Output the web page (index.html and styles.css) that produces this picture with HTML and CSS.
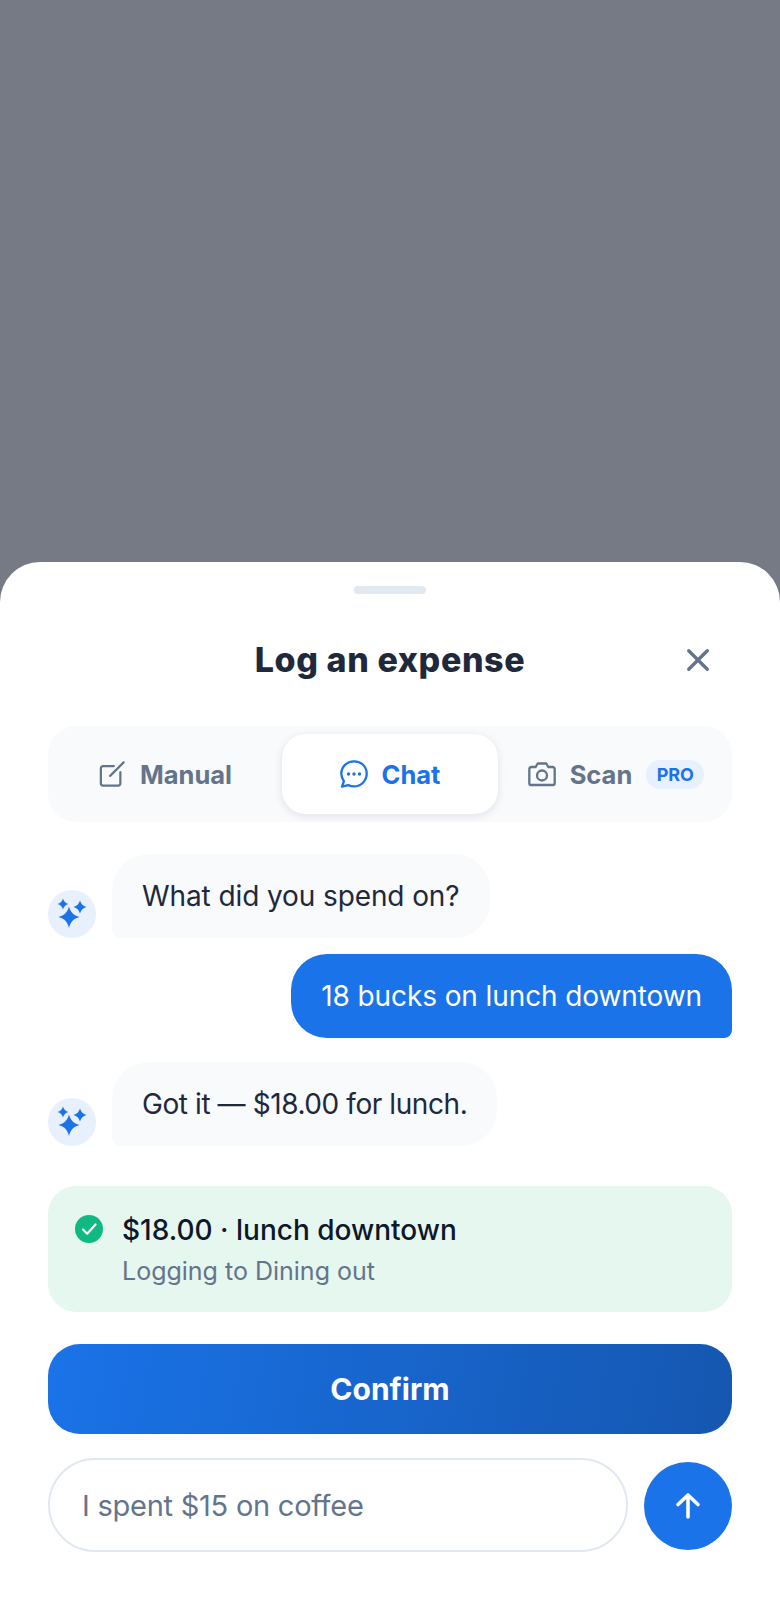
FILE: index.html
```html
<!DOCTYPE html>
<html lang="en">
<head>
<meta charset="utf-8">
<title>Log an expense</title>
<link rel="stylesheet" href="styles.css">
</head>
<body>
<div class="scrim">
  <section class="sheet">
    <div class="handle"></div>
    <header class="sheet-head">
      <h1 class="title">Log an expense</h1>
      <button class="close" aria-label="Close">
        <svg class="close-icon" viewBox="0 0 28 28" fill="none" stroke="currentColor" stroke-width="3.6" stroke-linecap="round"><path d="M4 4l20 20M24 4L4 24"/></svg>
      </button>
    </header>
    <nav class="tabs">
      <div class="tab tab-manual">
        <svg class="tab-icon-manual" viewBox="0 0 28 28" fill="none" stroke="currentColor" stroke-width="2.4" stroke-linecap="round" stroke-linejoin="round"><path d="M16 5.500H4.500a2.500 2.500 0 0 0-2.500 2.500v16a2.500 2.500 0 0 0 2.500 2.500h16a2.500 2.500 0 0 0 2.500-2.500V12"/><path d="M12 16L26.500 1.500"/></svg>
        <span class="tab-label">Manual</span>
      </div>
      <div class="tab tab-active">
        <svg class="tab-icon" viewBox="0 0 28 28" fill="none" stroke="currentColor" stroke-width="2.300" stroke-linecap="round" stroke-linejoin="round"><path d="M14 1.300C7 1.300 1.300 6.800 1.300 13.600c0 2.800 1 5.400 2.600 7.500L2 26.700l6.300-1.600c1.700.8 3.700 1.300 5.700 1.300 7 0 12.700-5.600 12.700-12.800S21 1.300 14 1.300z"/><circle class="dot" cx="8.500" cy="14" r="1.700"/><circle class="dot" cx="14" cy="14" r="1.700"/><circle class="dot" cx="19.500" cy="14" r="1.700"/></svg>
        <span class="tab-label">Chat</span>
      </div>
      <div class="tab">
        <svg class="tab-icon" viewBox="0 0 28 28" fill="none" stroke="currentColor" stroke-width="2.300" stroke-linecap="round" stroke-linejoin="round"><path d="M3.500 7h4.200l2-3.500h8.600l2 3.500h4.200A2.200 2.200 0 0 1 26.700 9.200v14a1.800 1.800 0 0 1-1.800 1.800H3.100a1.800 1.800 0 0 1-1.800-1.800v-14A2.200 2.200 0 0 1 3.500 7z"/><circle cx="14" cy="15.500" r="5"/></svg>
        <span class="tab-label">Scan</span>
        <span class="pro">PRO</span>
      </div>
    </nav>
    <div class="messages">
      <div class="msg">
        <div class="avatar">
          <svg class="spark" viewBox="0 0 48 48"><path d="M21 16.500C22.500 22 25.500 25.500 31.500 27 25.500 28.500 22.500 32 21 38 19.500 32 16.500 28.500 10.500 27 16.500 25.500 19.500 22 21 16.500Z"/><path d="M15 8.500C15.800 11.500 17.500 13.200 20.500 14 17.500 14.800 15.800 16.500 15 19.500 14.200 16.500 12.500 14.800 9.500 14 12.500 13.200 14.200 11.500 15 8.500Z"/><path d="M32 10.500C33 14 35 16 38.500 17 35 18 33 20 32 23.500 31 20 29 18 25.500 17 29 16 31 14 32 10.500Z"/></svg>
        </div>
        <p class="bubble bubble-bot">What did you spend on?</p>
      </div>
      <div class="msg msg-user">
        <p class="bubble bubble-user">18 bucks on lunch downtown</p>
      </div>
      <div class="msg msg-gap">
        <div class="avatar">
          <svg class="spark" viewBox="0 0 48 48"><path d="M21 16.500C22.500 22 25.500 25.500 31.500 27 25.500 28.500 22.500 32 21 38 19.500 32 16.500 28.500 10.500 27 16.500 25.500 19.500 22 21 16.500Z"/><path d="M15 8.500C15.800 11.500 17.500 13.200 20.500 14 17.500 14.800 15.800 16.500 15 19.500 14.200 16.500 12.500 14.800 9.500 14 12.500 13.200 14.200 11.500 15 8.500Z"/><path d="M32 10.500C33 14 35 16 38.500 17 35 18 33 20 32 23.500 31 20 29 18 25.500 17 29 16 31 14 32 10.500Z"/></svg>
        </div>
        <p class="bubble bubble-bot bubble-tight">Got it — $18.00 for lunch.</p>
      </div>
    </div>
    <div class="summary">
      <svg class="check" viewBox="0 0 28 28"><circle cx="14" cy="14" r="14" fill="#10b981"/><path d="M8 14.500l4.200 4.200L20.500 9.500" fill="none" stroke="#fff" stroke-width="2.200" stroke-linecap="round" stroke-linejoin="round"/></svg>
      <div class="summary-text">
        <div class="summary-main">$18.00 · lunch downtown</div>
        <div class="summary-sub">Logging to Dining out</div>
      </div>
    </div>
    <button class="confirm">Confirm</button>
    <div class="composer">
      <div class="field">I spent $15 on coffee</div>
      <button class="send" aria-label="Send">
        <svg class="send-icon" viewBox="0 0 26 28" fill="none" stroke="#fff" stroke-width="3.600" stroke-linecap="round" stroke-linejoin="round"><path d="M13 25V3M3 12.500L13 3l10 9.500"/></svg>
      </button>
    </div>
  </section>
</div>
</body>
</html>
```
FILE: styles.css
```css
* { box-sizing: border-box; }
html, body { margin: 0; padding: 0; }
body { font-family: "Inter", "Noto Sans", sans-serif; }
.scrim {
  min-height: 1600px;
  background: #767a84;
  display: flex;
  flex-direction: column;
  justify-content: flex-end;
}
.sheet {
  background: #fff;
  border-radius: 40px 40px 0 0;
  padding: 24px 48px 48px;
  height: 1038px;
}
.handle {
  width: 72px;
  height: 8px;
  border-radius: 4px;
  background: #e2e8f0;
  margin: 0 auto 32px;
}
.sheet-head {
  display: grid;
  grid-template-columns: 68px 1fr 68px;
  align-items: center;
  height: 68px;
  margin-bottom: 32px;
}
.title {
  grid-column: 2;
  margin: 0;
  text-align: center;
  font-size: 34px;
  line-height: 44px;
  font-weight: 800;
  letter-spacing: 0.6px;
  color: #1e293b;
}
.close {
  grid-column: 3;
  width: 68px;
  height: 68px;
  padding: 0;
  border: 0;
  background: none;
  color: #64748b;
  display: flex;
  align-items: center;
  justify-content: center;
}
.close-icon { width: 26px; height: 26px; }
.tabs {
  display: grid;
  grid-template-columns: repeat(3, 1fr);
  gap: 10px;
  padding: 8px;
  height: 96px;
  background: #f8fafc;
  border-radius: 28px;
  margin-bottom: 32px;
}
.tab {
  display: flex;
  align-items: center;
  justify-content: center;
  gap: 14px;
  border-radius: 24px;
  color: #64748b;
}
.tab-manual { gap: 15px; padding-left: 3px; }
.tab-active {
  background: #fff;
  color: #1a73e8;
  box-shadow: 0 2px 8px rgba(15, 23, 42, 0.1);
}
.tab-icon { width: 28px; height: 28px; flex: none; }
.tab-icon-manual { width: 26px; height: 26px; flex: none; }
.dot { fill: currentColor; stroke: none; }
.tab-label {
  font-size: 25.500px;
  line-height: 36px;
  font-weight: 700;
  padding-top: 2px;
}
.pro {
  width: 58px;
  height: 29px;
  border-radius: 15px;
  background: #e8f0fe;
  color: #1a73e8;
  font-size: 18px;
  font-weight: 700;
  line-height: 29px;
  text-align: center;
}
.messages {
  display: flex;
  flex-direction: column;
  gap: 16px;
  margin-bottom: 40px;
}
.msg {
  display: flex;
  align-items: flex-end;
  gap: 16px;
}
.msg-user { justify-content: flex-end; }
.msg-gap { margin-top: 8px; }
.avatar {
  width: 48px;
  height: 48px;
  flex: none;
  border-radius: 50%;
  background: #e8f0fe;
}
.spark { display: block; width: 48px; height: 48px; fill: #1a73e8; }
.bubble {
  margin: 0;
  padding: 20px 30px;
  font-size: 28px;
  line-height: 44px;
  letter-spacing: -0.1px;
}
.bubble-tight { letter-spacing: -0.42px; }
.bubble-bot {
  background: #f8fafc;
  color: #1e293b;
  border-radius: 36px 36px 36px 8px;
}
.bubble-user {
  background: #1a73e8;
  color: #fff;
  border-radius: 36px 36px 8px 36px;
}
.summary {
  display: flex;
  align-items: flex-start;
  gap: 19px;
  height: 126px;
  padding: 26px 27px;
  background: #e6f7ef;
  border-radius: 28px;
  margin-bottom: 32px;
}
.check { width: 28px; height: 28px; flex: none; margin-top: 3px; }
.summary-main {
  font-size: 28px;
  line-height: 36px;
  font-weight: 500;
  color: #0f172a;
}
.summary-sub {
  margin-top: 5px;
  font-size: 25px;
  line-height: 36px;
  color: #64748b;
}
.confirm {
  display: block;
  width: 100%;
  height: 90px;
  border: 0;
  border-radius: 32px;
  background: linear-gradient(100deg, #1a73e8, #1557b0);
  color: #fff;
  font-family: inherit;
  font-size: 30px;
  font-weight: 700;
  margin-bottom: 24px;
}
.composer {
  display: flex;
  align-items: center;
  gap: 16px;
}
.field {
  flex: 1;
  height: 94px;
  border: 2px solid #e2e8f0;
  border-radius: 47px;
  padding: 0 32px;
  display: flex;
  align-items: center;
  font-size: 29px;
  letter-spacing: -0.25px;
  color: #64748b;
}
.send {
  width: 88px;
  height: 88px;
  flex: none;
  padding: 0;
  border: 0;
  border-radius: 50%;
  background: #1a73e8;
  margin-top: 2px;
  display: flex;
  align-items: center;
  justify-content: center;
}
.send-icon { width: 26px; height: 28px; }
```
